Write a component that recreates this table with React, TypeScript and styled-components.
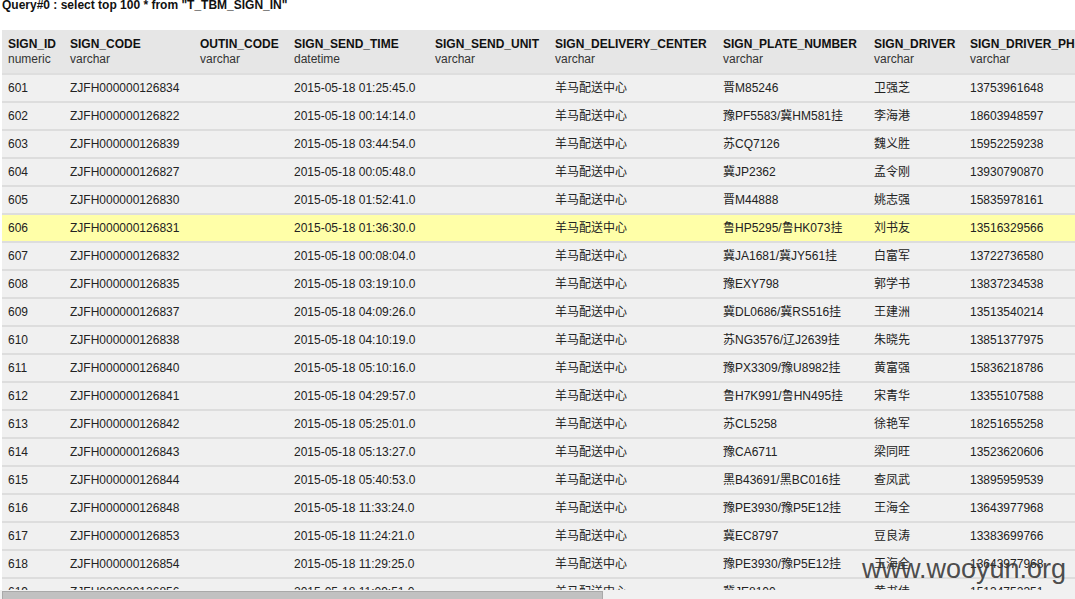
import React from "react";
import styled, { createGlobalStyle } from "styled-components";

const Global = createGlobalStyle`
  html, body { margin: 0; padding: 0; background: #fff; overflow: hidden; }
  body { font-family: "Liberation Sans", Arial, "Noto Sans CJK SC", sans-serif; }
`;

const Page = styled.div`
  position: relative;
  width: 1075px;
  height: 599px;
  display: flex;
  flex-direction: column;
  overflow: hidden;
`;

const Title = styled.div`
  height: 31px;
  flex: none;
  padding-left: 2px;
  font-size: 12px;
  font-weight: bold;
  line-height: 12px;
  margin-top: -1px;
  color: #111;
  white-space: nowrap;
`;

const TableArea = styled.div`
  flex: 1;
  overflow: hidden;
  padding-left: 2px;
`;

const Table = styled.table`
  border-collapse: collapse;
  table-layout: fixed;
  width: 1180px;
  font-size: 12px;
  color: #222;
`;

const Col = styled.col<{ $w: number }>`
  width: ${(p) => p.$w}px;
`;

const HeadRow = styled.tr`
  background: #e6e6e6;
  border-bottom: 2px solid #dedede;
`;

const HeadCell = styled.th`
  height: 43px;
  padding: 0 6px;
  text-align: left;
  vertical-align: middle;
  white-space: nowrap;
  overflow: hidden;
  font-weight: normal;
`;

const ColName = styled.div`
  font-weight: bold;
  color: #111;
  line-height: 15px;
`;

const ColType = styled.div`
  color: #333;
  line-height: 15px;
`;

const Row = styled.tr<{ $hl?: boolean }>`
  background: ${(p) => (p.$hl ? "#ffffa8" : "#f0f0f0")};
  border-bottom: 2px solid #dddddd;
`;

const Cell = styled.td`
  height: 26px;
  padding: 0 6px;
  white-space: nowrap;
  overflow: hidden;
  vertical-align: middle;
  line-height: 14px;
`;

const ScrollTrack = styled.div`
  height: 9px;
  flex: none;
  background: #f1f1f1;
  padding: 1px 0 0 2px;
  box-sizing: border-box;
  overflow: hidden;
`;

const ScrollThumb = styled.div`
  width: 601px;
  height: 10px;
  background: #c1c1c1;
  border: 1px solid #a9a9a9;
  box-sizing: border-box;
`;

const Watermark = styled.div`
  position: absolute;
  left: 862px;
  top: 553px;
  font-family: "Liberation Sans", Arial, sans-serif;
  font-size: 27px;
  line-height: 32px;
  color: rgba(55, 55, 55, 0.9);
  white-space: nowrap;
  pointer-events: none;
`;

const columns: [string, string, number][] = [
  ["SIGN_ID", "numeric", 62],
  ["SIGN_CODE", "varchar", 130],
  ["OUTIN_CODE", "varchar", 94],
  ["SIGN_SEND_TIME", "datetime", 141],
  ["SIGN_SEND_UNIT", "varchar", 120],
  ["SIGN_DELIVERY_CENTER", "varchar", 168],
  ["SIGN_PLATE_NUMBER", "varchar", 151],
  ["SIGN_DRIVER", "varchar", 96],
  ["SIGN_DRIVER_PHONE", "varchar", 218],
];

const rows: string[][] = [
  ["601", "ZJFH000000126834", "2015-05-18 01:25:45.0", "晋M85246", "卫强芝", "13753961648"],
  ["602", "ZJFH000000126822", "2015-05-18 00:14:14.0", "豫PF5583/冀HM581挂", "李海港", "18603948597"],
  ["603", "ZJFH000000126839", "2015-05-18 03:44:54.0", "苏CQ7126", "魏义胜", "15952259238"],
  ["604", "ZJFH000000126827", "2015-05-18 00:05:48.0", "冀JP2362", "孟令刚", "13930790870"],
  ["605", "ZJFH000000126830", "2015-05-18 01:52:41.0", "晋M44888", "姚志强", "15835978161"],
  ["606", "ZJFH000000126831", "2015-05-18 01:36:30.0", "鲁HP5295/鲁HK073挂", "刘书友", "13516329566"],
  ["607", "ZJFH000000126832", "2015-05-18 00:08:04.0", "冀JA1681/冀JY561挂", "白富军", "13722736580"],
  ["608", "ZJFH000000126835", "2015-05-18 03:19:10.0", "豫EXY798", "郭学书", "13837234538"],
  ["609", "ZJFH000000126837", "2015-05-18 04:09:26.0", "冀DL0686/冀RS516挂", "王建洲", "13513540214"],
  ["610", "ZJFH000000126838", "2015-05-18 04:10:19.0", "苏NG3576/辽J2639挂", "朱晓先", "13851377975"],
  ["611", "ZJFH000000126840", "2015-05-18 05:10:16.0", "豫PX3309/豫U8982挂", "黄富强", "15836218786"],
  ["612", "ZJFH000000126841", "2015-05-18 04:29:57.0", "鲁H7K991/鲁HN495挂", "宋青华", "13355107588"],
  ["613", "ZJFH000000126842", "2015-05-18 05:25:01.0", "苏CL5258", "徐艳军", "18251655258"],
  ["614", "ZJFH000000126843", "2015-05-18 05:13:27.0", "豫CA6711", "梁同旺", "13523620606"],
  ["615", "ZJFH000000126844", "2015-05-18 05:40:53.0", "黑B43691/黑BC016挂", "查凤武", "13895959539"],
  ["616", "ZJFH000000126848", "2015-05-18 11:33:24.0", "豫PE3930/豫P5E12挂", "王海全", "13643977968"],
  ["617", "ZJFH000000126853", "2015-05-18 11:24:21.0", "冀EC8797", "豆良涛", "13383699766"],
  ["618", "ZJFH000000126854", "2015-05-18 11:29:25.0", "豫PE3930/豫P5E12挂", "王海全", "13643977968"],
  ["619", "ZJFH000000126856", "2015-05-18 11:09:51.0", "冀JE8100", "黄书佳", "15134752351"],
];

export default function App() {
  return (
    <Page>
      <Global />
      <Title>Query#0 : select top 100 * from "T_TBM_SIGN_IN"</Title>
      <TableArea>
        <Table>
          <colgroup>
            {columns.map(([n, , w]) => (
              <Col key={n} $w={w} />
            ))}
          </colgroup>
          <thead>
            <HeadRow>
              {columns.map(([n, t]) => (
                <HeadCell key={n}>
                  <ColName>{n}</ColName>
                  <ColType>{t}</ColType>
                </HeadCell>
              ))}
            </HeadRow>
          </thead>
          <tbody>
            {rows.map((r) => (
              <Row key={r[0]} $hl={r[0] === "606"}>
                <Cell>{r[0]}</Cell>
                <Cell>{r[1]}</Cell>
                <Cell></Cell>
                <Cell>{r[2]}</Cell>
                <Cell></Cell>
                <Cell>羊马配送中心</Cell>
                <Cell>{r[3]}</Cell>
                <Cell>{r[4]}</Cell>
                <Cell>{r[5]}</Cell>
              </Row>
            ))}
          </tbody>
        </Table>
      </TableArea>
      <ScrollTrack>
        <ScrollThumb />
      </ScrollTrack>
      <Watermark>www.wooyun.org</Watermark>
    </Page>
  );
}
